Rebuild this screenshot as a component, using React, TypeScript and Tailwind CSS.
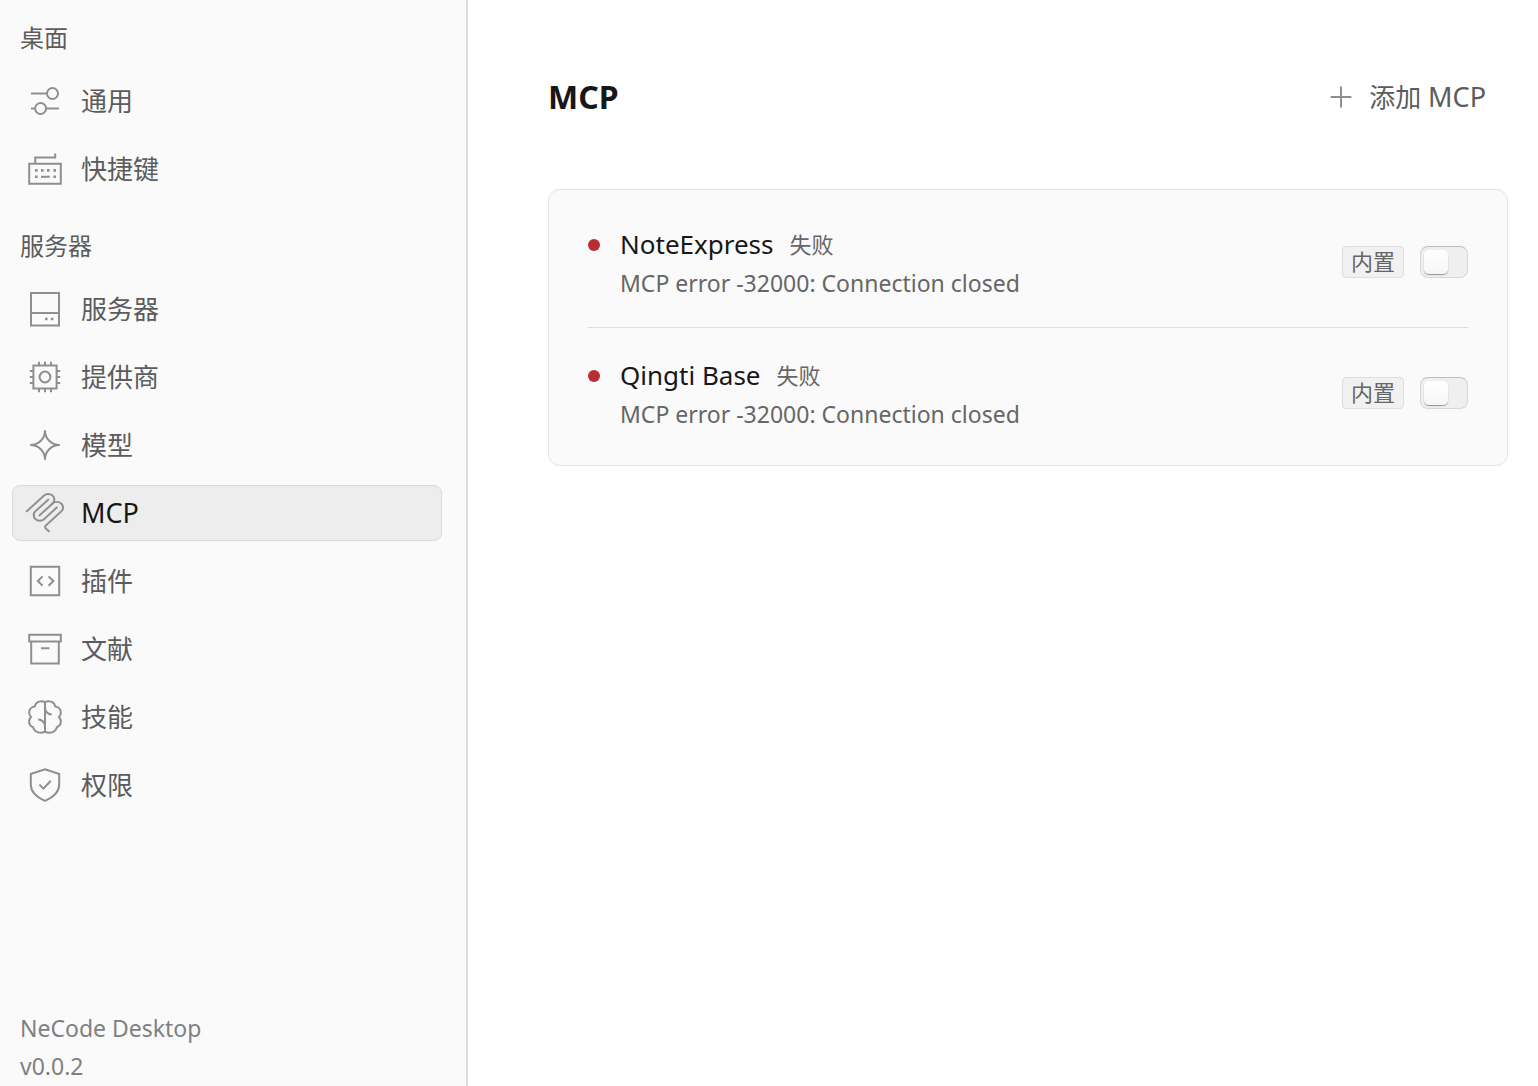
import { useState, type ReactNode } from "react";

function Icon({ children }: { children: ReactNode }) {
  return (
    <svg
      viewBox="0 0 20 20"
      className="size-10 shrink-0 overflow-visible text-[#8f8f8f]"
      fill="none"
      stroke="currentColor"
      aria-hidden="true"
    >
      {children}
    </svg>
  );
}

const icons = {
  sliders: (
    <>
      <path d="M3 6.25h7.9M3 13.75h1.9M10.8 13.75h6.2" />
      <circle cx="13.75" cy="6.25" r="2.75" />
      <circle cx="7.8" cy="13.75" r="2.75" />
    </>
  ),
  keyboard: (
    <>
      <path d="M2.1 7.4h15.8v10H2.1zM5.1 7.4V4.2h10V2.3M8 13.9h4.4" />
      <path d="M5 10.7h1.3M8 10.7h1.3M11 10.7h1.3M14.2 10.7h1.3M5 13.9h1.3M14.2 13.9h1.3" strokeWidth="1.3" />
    </>
  ),
  server: (
    <>
      <path d="M3 2h14v16.3H3zM3 12h14" />
      <path d="M10 15h1.3M12.9 15h1.3" strokeWidth="1.3" />
    </>
  ),
  provider: (
    <>
      <path d="M4.2 4.2h11.6v11.6H4.2z" />
      <circle cx="10" cy="10" r="2.7" />
      <path d="M7 4.2V2.4M10 4.2V2.4M13 4.2V2.4M7 17.6v-1.8M10 17.6v-1.8M13 17.6v-1.8M4.2 7H2.4M4.2 10H2.4M4.2 13H2.4M17.6 7h-1.8M17.6 10h-1.8M17.6 13h-1.8" />
    </>
  ),
  models: <path d="M10 2.6C10 6.9 6.9 10 2.6 10C6.9 10 10 13.1 10 17.4C10 13.1 13.1 10 17.4 10C13.1 10 10 6.9 10 2.6Z" />,
  mcp: (
    <g transform="translate(-1.43 -0.66) scale(0.127 0.116)" strokeWidth="8.2" strokeLinecap="round">
      <path d="M18 84.8528L85.8822 16.9706C95.2548 7.59798 110.451 7.59798 119.823 16.9706C129.196 26.3431 129.196 41.5391 119.823 50.9117L68.5581 102.177" />
      <path d="M119.823 50.9117C129.196 41.5391 144.392 41.5391 153.765 50.9117L154.118 51.2652C163.491 60.6378 163.491 75.8338 154.118 85.2063L92.7248 146.6C89.6006 149.724 89.6006 154.789 92.7248 157.913L105.331 170.52" />
      <path d="M102.853 33.9411L52.6482 84.1457C43.2756 93.5183 43.2756 108.714 52.6482 118.087C62.0208 127.459 77.2167 127.459 86.5893 118.087L136.794 67.8822" />
    </g>
  ),
  plugin: <path d="M2.9 2.9h14.2v14.2H2.9zM8.8 7.7L6.4 10l2.4 2.4M11.8 7.7L14.2 10l-2.4 2.4" />,
  archive: <path d="M2.1 2.9h15.8v3.4H2.1zM3.1 6.3v11h13.8v-11M8 9.6h4.2" />,
  brain: (
    <path d="M13.332 8.7487C11.4911 8.7487 9.9987 7.25631 9.9987 5.41536M6.66536 11.2487C8.50631 11.2487 9.9987 12.7411 9.9987 14.582M9.9987 2.78209L9.9987 17.0658M16.004 15.0475C17.1255 14.5876 17.9154 13.4849 17.9154 12.1978C17.9154 11.3363 17.5615 10.5575 16.9913 9.9987C17.5615 9.43991 17.9154 8.66108 17.9154 7.79962C17.9154 6.21199 16.7136 4.90504 15.1702 4.73878C14.7858 3.21216 13.4039 2.08203 11.758 2.08203C11.1171 2.08203 10.5162 2.25337 9.9987 2.55275C9.48117 2.25337 8.88032 2.08203 8.23944 2.08203C6.59353 2.08203 5.21157 3.21216 4.82722 4.73878C3.28377 4.90504 2.08203 6.21199 2.08203 7.79962C2.08203 8.66108 2.43585 9.43991 3.00609 9.9987C2.43585 10.5575 2.08203 11.3363 2.08203 12.1978C2.08203 13.4849 2.87191 14.5876 3.99339 15.0475C4.46688 16.7033 5.9917 17.9154 7.79962 17.9154C8.61335 17.9154 9.36972 17.6698 9.9987 17.2488C10.6277 17.6698 11.384 17.9154 12.1978 17.9154C14.0057 17.9154 15.5305 16.7033 16.004 15.0475Z" />
  ),
  shield: (
    <path d="M10 2.1L17.1 4.5V9.7C17.1 14 13.4 16.4 10 17.9C6.6 16.4 2.9 14 2.9 9.7V4.5ZM7.2 9.8L9.2 11.8L12.9 7.9" />
  ),
  plus: <path d="M10 4.8v10.4M4.8 10h10.4" />,
};

type IconName = keyof typeof icons;

const sections: { title: string; items: { icon: IconName; label: ReactNode }[] }[] = [
  {
    title: "桌面",
    items: [
      { icon: "sliders", label: "通用" },
      { icon: "keyboard", label: "快捷键" },
    ],
  },
  {
    title: "服务器",
    items: [
      { icon: "server", label: "服务器" },
      { icon: "provider", label: "提供商" },
      { icon: "models", label: "模型" },
      { icon: "mcp", label: <span className="text-[27px]">MCP</span> },
      { icon: "plugin", label: "插件" },
      { icon: "archive", label: "文献" },
      { icon: "brain", label: "技能" },
      { icon: "shield", label: "权限" },
    ],
  },
];

const servers = [
  { name: "NoteExpress", error: "MCP error -32000: Connection closed" },
  { name: "Qingti Base", error: "MCP error -32000: Connection closed" },
];

function ServerRow({ name, error }: { name: string; error: string }) {
  const [on, setOn] = useState(false);
  return (
    <li className="flex items-center justify-between border-t border-[#dedede] py-[26px] first:border-t-0">
      <div className="flex gap-5">
        <span className="mt-4 size-3 shrink-0 rounded-full bg-[#b92d35]" />
        <div>
          <div className="flex items-center gap-4 leading-[42px]">
            <span className="text-[26px] text-[#171717]">{name}</span>
            <span className="text-[22px] text-[#666666]">失败</span>
          </div>
          <p className="text-[23px] leading-9 text-[#666666]">{error}</p>
        </div>
      </div>
      <div className="flex items-center gap-4">
        <span className="h-8 rounded-sm border border-[#dedede] bg-[#f1f1f1] px-2 text-[22px] leading-7 text-[#666666]">
          内置
        </span>
        <label className="flex h-8 w-12 items-center rounded-lg border border-[#d6d6d6] border-t-[#bdbdbd] bg-[#efefef] px-[3px]">
          <input
            type="checkbox"
            role="switch"
            aria-label={name}
            checked={on}
            onChange={() => setOn(!on)}
            className="size-6 appearance-none rounded-[5px] bg-linear-to-b from-white to-[#f6f6f6] shadow-[0_1px_1px_#8f8f8f] checked:ml-auto"
          />
        </label>
      </div>
    </li>
  );
}

export default function App() {
  const [active, setActive] = useState<IconName>("mcp");
  return (
    <div className="flex min-h-screen bg-white font-['Noto_Sans','Noto_Sans_CJK_SC',sans-serif] text-[26px] text-[#5c5c5c]">
      <aside className="flex w-[468px] shrink-0 flex-col justify-between border-r-2 border-[#dedede] bg-[#fafafa]">
        <nav className="flex flex-col gap-8 pt-[21px] pr-6 pl-3">
          {sections.map((section) => (
            <section key={section.title} className="flex flex-col gap-[18px]">
              <h2 className="pl-2 text-2xl leading-[34px]">{section.title}</h2>
              <ul className="flex flex-col gap-3">
                {section.items.map((item) => (
                  <li key={item.icon}>
                    <button
                      type="button"
                      onClick={() => setActive(item.icon)}
                      aria-current={active === item.icon ? "page" : undefined}
                      className="flex h-14 w-full items-center gap-4 rounded-lg border border-transparent px-3 leading-9 aria-[current]:border-[#dadada] aria-[current]:bg-[#ededed] aria-[current]:text-[#171717]"
                    >
                      <Icon>{icons[item.icon]}</Icon>
                      <span>{item.label}</span>
                    </button>
                  </li>
                ))}
              </ul>
            </section>
          ))}
        </nav>
        <footer className="pb-px pl-5 text-[23px] leading-[38px] text-[#808080]">
          <p>NeCode Desktop</p>
          <p>v0.0.2</p>
        </footer>
      </aside>
      <main className="flex flex-1 flex-col gap-16 pt-[69px] pr-[30px] pl-20">
        <header className="flex h-14 items-center justify-between">
          <h1 className="text-[32px] font-bold text-[#171717]">MCP</h1>
          <button type="button" className="flex h-14 items-center gap-2 pr-[22px] leading-9">
            <Icon>{icons.plus}</Icon>
            <span>
              添加 <span className="text-[27px]">MCP</span>
            </span>
          </button>
        </header>
        <ul className="rounded-xl border border-[#e4e4e4] bg-[#fafafa] px-[39px] py-[7px]">
          {servers.map((server) => (
            <ServerRow key={server.name} {...server} />
          ))}
        </ul>
      </main>
    </div>
  );
}
